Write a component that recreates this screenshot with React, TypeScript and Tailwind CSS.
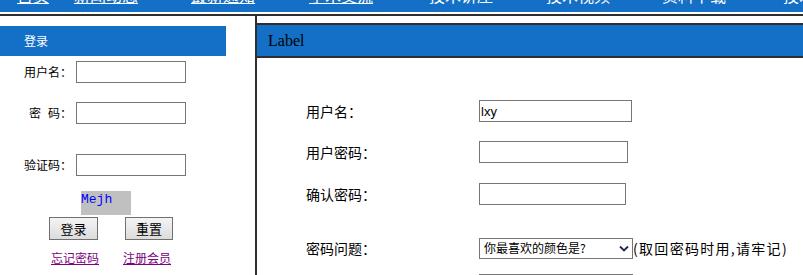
const cjk = "font-['SimSun','Noto_Sans_CJK_SC',sans-serif]";

const navItems = [
  { text: '首页', cls: 'ml-[17px]', link: true },
  { text: '新闻动态', cls: 'ml-[25px]', link: true },
  { text: '最新通知', cls: 'ml-[53px]', link: true },
  { text: '学术交流', cls: 'ml-[54px]', link: true },
  { text: '技术讲座', cls: 'ml-[56px]', link: false },
  { text: '技术视频', cls: 'ml-[53px]', link: false },
  { text: '资料下载', cls: 'ml-[52px]', link: false },
  { text: '技术论坛', cls: 'ml-[57px]', link: false },
];

function NavBar() {
  return (
    <div className="h-[12px] overflow-hidden bg-[#1470c6]">
      <div className={`-mt-[13px] flex whitespace-nowrap text-[16px] leading-[16px] text-white ${cjk}`}>
        {navItems.map((n) => (
          <a key={n.text} className={`${n.cls} shrink-0 ${n.link ? 'underline' : ''}`}>
            {n.text}
          </a>
        ))}
      </div>
    </div>
  );
}

function LeftRow({ label, className }: { label: React.ReactNode; className: string }) {
  return (
    <div className={`flex h-[22px] items-center ${className}`}>
      <span className="w-[72px] whitespace-pre text-right text-[12px] text-black">{label}</span>
      <input className="ml-[4px] h-[22px] w-[110px] border border-[#767676] bg-white outline-none" />
    </div>
  );
}

function LoginPanel() {
  return (
    <div className={`w-[255px] shrink-0 pt-[10px] ${cjk}`}>
      <div className="flex h-[30px] w-[226px] items-center bg-[#1470c6] pl-[24px] text-[12px] text-white">登录</div>
      <LeftRow label="用户名：" className="mt-[5px]" />
      <LeftRow
        label={
          <>
            <span className="mr-[7px]">密</span>码：
          </>
        }
        className="mt-[19px]"
      />
      <LeftRow label="验证码：" className="mt-[30px]" />
      <div className="ml-[81px] mt-[15px] h-[24px] w-[50px] bg-[#c0c0c0] font-['Liberation_Mono',monospace] text-[13px] leading-[18px] text-[#0000ff]">
        Mejh
      </div>
      <div className="mt-[2px] flex">
        <button className="ml-[49px] h-[23px] w-[49px] border border-[#707070] bg-gradient-to-b from-[#f4f4f4] to-[#dcdcdc] text-[13px] text-black">
          登录
        </button>
        <button className="ml-[27px] h-[23px] w-[48px] border border-[#707070] bg-gradient-to-b from-[#f4f4f4] to-[#dcdcdc] text-[13px] text-black">
          重置
        </button>
      </div>
      <div className="mt-[12px] flex text-[12px] leading-[12px] text-[#800080]">
        <a className="ml-[51px] underline">忘记密码</a>
        <a className="ml-[24px] underline">注册会员</a>
      </div>
    </div>
  );
}

function FormRow({ label, className, children }: { label: string; className: string; children: React.ReactNode }) {
  return (
    <div className={`flex h-[22px] items-center ${className}`}>
      <span className="w-[222px] shrink-0 pl-[49px] text-[14px] text-black">{label}</span>
      {children}
    </div>
  );
}

function RegisterPanel() {
  return (
    <div className={`flex-1 border-l-2 border-[#2f2f2f] ${cjk}`}>
      <div className="mt-[7px] flex h-[35px] items-center border-y-2 border-[#2f2f2f] bg-[#1470c6] pl-[11px] font-['Liberation_Serif',serif] text-[16px] text-black">
        Label
      </div>
      <FormRow label="用户名：" className="mt-[42px]">
        <input
          defaultValue="lxy"
          className="h-[22px] w-[153px] border border-[#767676] px-[1px] font-['Liberation_Sans',sans-serif] text-[13px] text-black outline-none"
        />
      </FormRow>
      <FormRow label="用户密码：" className="mt-[19px]">
        <input type="password" className="h-[22px] w-[149px] border border-[#767676] outline-none" />
      </FormRow>
      <FormRow label="确认密码：" className="mt-[20px]">
        <input type="password" className="h-[22px] w-[147px] border border-[#767676] outline-none" />
      </FormRow>
      <FormRow label="密码问题：" className="mt-[32px]">
        <div className="flex h-[21px] w-[154px] shrink-0 items-center border border-[#767676] bg-white pl-[4px] pr-[3px]">
          <select className="w-full appearance-none bg-transparent text-[12px] text-black outline-none">
            <option>你最喜欢的颜色是?</option>
            <option>你的出生地是?</option>
          </select>
          <svg width="10" height="7" viewBox="0 0 10 7" className="shrink-0">
            <path d="M1 1.5 L5 5.5 L9 1.5" fill="none" stroke="#1d2a4a" strokeWidth="1.8" />
          </svg>
        </div>
        <span className="whitespace-nowrap text-[14px] tracking-[1.3px] text-black">(取回密码时用,请牢记)</span>
      </FormRow>
      <FormRow label="" className="mt-[15px]">
        <input className="h-[22px] w-[154px] border border-[#767676] outline-none" />
      </FormRow>
    </div>
  );
}

export default function App() {
  return (
    <div className="h-[275px] w-[803px] overflow-hidden bg-white">
      <NavBar />
      <div className="h-[2px] bg-white" />
      <div className="h-[2px] bg-[#2f2f2f]" />
      <div className="flex">
        <LoginPanel />
        <RegisterPanel />
      </div>
    </div>
  );
}
